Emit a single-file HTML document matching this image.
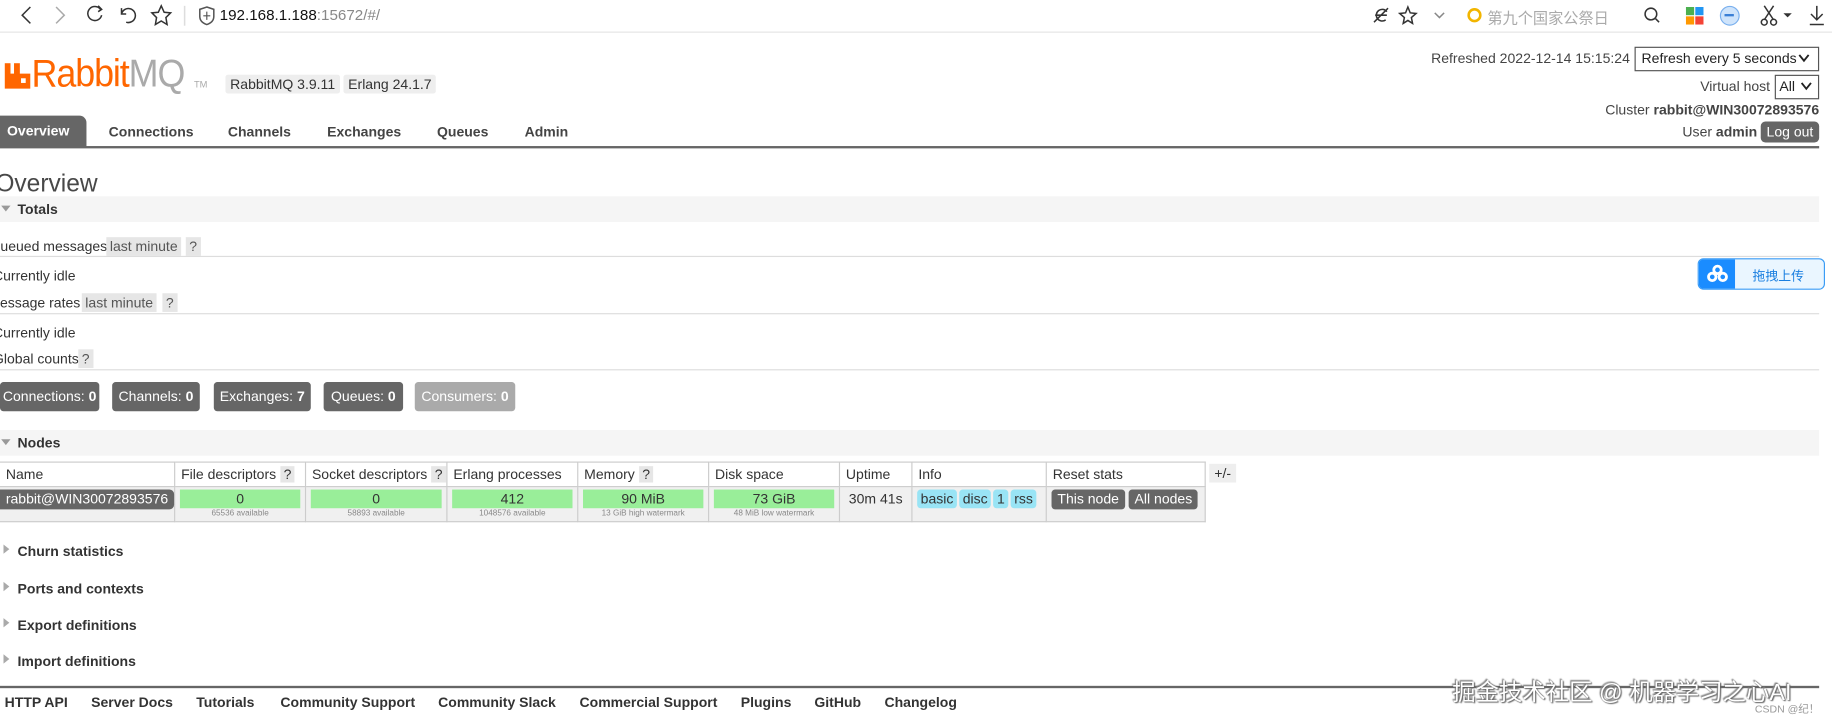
<!DOCTYPE html>
<html><head><meta charset="utf-8">
<style>
html,body{margin:0;padding:0;width:1832px;height:722px;overflow:hidden;background:#fff}
#w{position:absolute;left:0;top:0;width:1568px;height:618px;transform:scale(1.16837);transform-origin:0 0;font-family:"Liberation Sans","Noto Sans CJK SC",sans-serif;font-size:12px;color:#333}
.a{position:absolute;white-space:nowrap}
.b{font-weight:bold}
.badge{position:absolute;background:#eee;padding:0 4px;height:16px;line-height:16px;border-radius:2px}
.q{position:absolute;background:#e6e6e6;height:16px;line-height:16px;padding:0 3px;color:#555}
.hl{position:absolute;left:0;width:1557px;height:1px;background:#ddd}
.btn{position:absolute;top:327px;height:25px;line-height:25px;background:#666;color:#fff;border-radius:3px;text-align:center;font-size:12px}
.bar{position:absolute;left:0;width:1557px;height:22px;background:#f5f5f5}
.tri{position:absolute;width:0;height:0}
td,th{border:1px solid #ccc;padding:0 5px;font-weight:normal;text-align:left}
.g{background:#99ee99;height:16px;line-height:16px;text-align:center;margin:0 auto;width:100%;font-size:12px}
.s{font-size:7px;color:#888;text-align:center;line-height:9px}
.cy{display:inline-block;background:#99e4f5;padding:0 3px;height:16px;line-height:16px;border-radius:3px;margin-right:2px}
.dk{display:inline-block;background:#666;color:#fff;padding:0 5px;height:17px;line-height:17px;border-radius:3px}
.ft{position:absolute;top:594px;font-weight:bold;color:#333}
</style></head><body><div id="w">
<!-- browser bar -->
<div class="a" style="left:0;top:27px;width:1568px;height:1px;background:#e5e5e5"></div>
<svg class="a" style="left:0;top:0" width="1568" height="27" fill="none" stroke="#333" stroke-width="1.3">
<path d="M26 6 L19 13 L26 20"/><path d="M48 6 L55 13 L48 20" stroke="#aaa"/>
<path d="M86 8 A6 6 0 1 0 87 13"/><path d="M84 5 L87 8 L84 10"/>
<path d="M104 7 L104 12 L108 12 M104 12 A6 6 0 1 1 108 19"/>
<path d="M138 5 L140.5 10.5 L146 11 L142 15 L143 21 L138 18 L133 21 L134 15 L130 11 L135.5 10.5 Z"/>
<path d="M158 5 L158 22" stroke="#ddd"/>
<path d="M177 6 L183 8 L183 14 Q183 19 177 21 Q171 19 171 14 L171 8 Z" stroke="#555"/><path d="M177 10 V17 M174 13.5 H180" stroke="#555" stroke-width="1"/>
<path d="M1187 10 A5 5 0 1 0 1186 17 M1177 13 H1187 M1176 19 L1188 7"/>
<path d="M1205 6 L1207 11 L1212 11.5 L1208 15 L1209 20 L1205 17.5 L1201 20 L1202 15 L1198 11.5 L1203 11 Z"/>
<path d="M1228 11 L1232 15 L1236 11" stroke="#888"/>
<circle cx="1262" cy="13" r="5" stroke="#f2b500" stroke-width="2.2"/>
<circle cx="1413" cy="12" r="5"/><path d="M1417 16 L1420 19"/>
<path d="M1510 5 L1518 17 M1518 5 L1510 17"/><circle cx="1510" cy="19" r="2.5"/><circle cx="1518" cy="19" r="2.5"/>
<path d="M1528 12 L1532 12 L1530 14 Z" fill="#333"/>
<path d="M1555 5 V17 M1550 12 L1555 17 L1560 12 M1549 21 H1561"/>
</svg>
<div class="a" style="left:1443px;top:6px;width:7px;height:7px;background:#4caf50"></div><div class="a" style="left:1451px;top:6px;width:7px;height:7px;background:#2196f3"></div>
<div class="a" style="left:1443px;top:14px;width:7px;height:7px;background:#ff9800"></div><div class="a" style="left:1451px;top:14px;width:7px;height:7px;background:#f44336"></div>
<div class="a" style="left:1472px;top:5px;width:15px;height:15px;border-radius:50%;background:#cfe4fb;border:1px solid #7ab0ee"></div><div class="a" style="left:1476px;top:12px;width:8px;height:2px;background:#3a7fd5"></div>
<div class="a" style="left:188px;top:5px;font-size:13px;color:#111">192.168.1.188<span style="color:#888">:15672/#/</span></div>
<div class="a" style="left:1273px;top:5px;font-size:13px;color:#aaa">第九个国家公祭日</div>
<!-- logo -->
<svg class="a" style="left:4px;top:54px" width="22" height="22"><path d="M0 0 H5 V9 H8 V0 H13 V9 H13 V22 H0 Z M13 9 H22 V22 H13Z" fill="#f60"/><rect x="14" y="13" width="4" height="4" fill="#fff"/></svg>
<div class="a" style="left:27px;top:44px;font-size:33px;color:#f60;letter-spacing:-1px;transform:scaleX(0.93);transform-origin:0 0">Rabbit<span style="color:#aaa">MQ</span></div>
<div class="a" style="left:166px;top:68px;font-size:8px;color:#aaa">TM</div>
<div class="badge" style="left:193px;top:64px">RabbitMQ 3.9.11</div>
<div class="badge" style="left:294px;top:64px">Erlang 24.1.7</div>
<!-- right header -->
<div class="a" style="right:173px;top:43px;color:#444">Refreshed 2022-12-14 15:15:24</div>
<div class="a" style="left:1399px;top:40px;width:156px;height:19px;border:1px solid #555;line-height:19px;text-indent:5px;color:#222">Refresh every 5 seconds</div>
<svg class="a" style="left:1539px;top:46px" width="10" height="8" fill="none" stroke="#222" stroke-width="1.6"><path d="M1 1 L5 6 L9 1"/></svg>
<div class="a" style="right:53px;top:67px;color:#444">Virtual host</div>
<div class="a" style="left:1519px;top:64px;width:36px;height:19px;border:1px solid #555;line-height:19px;text-indent:3px;color:#222">All</div>
<svg class="a" style="left:1541px;top:70px" width="10" height="8" fill="none" stroke="#222" stroke-width="1.6"><path d="M1 1 L5 6 L9 1"/></svg>
<div class="a" style="right:11px;top:87px;color:#444">Cluster <b>rabbit@WIN30072893576</b></div>
<div class="a" style="right:64px;top:106px;color:#444">User <b>admin</b></div>
<div class="a" style="left:1507px;top:104px;width:50px;height:18px;line-height:18px;background:#666;color:#fff;border-radius:4px;text-align:center">Log out</div>
<!-- tabs -->
<div class="a" style="left:0;top:99px;width:74px;height:27px;background:#666;border-radius:0 6px 0 0;color:#fff;font-weight:bold;line-height:27px;text-indent:6px">Overview</div>
<div class="a b" style="left:93px;top:106px;color:#444">Connections</div>
<div class="a b" style="left:195px;top:106px;color:#444">Channels</div>
<div class="a b" style="left:280px;top:106px;color:#444">Exchanges</div>
<div class="a b" style="left:374px;top:106px;color:#444">Queues</div>
<div class="a b" style="left:449px;top:106px;color:#444">Admin</div>
<div class="a" style="left:0;top:125px;width:1557px;height:1.5px;background:#666"></div>
<!-- overview -->
<div class="a" style="left:-4px;top:146px;font-size:21px;color:#484848">Overview</div>
<div class="bar" style="top:168px"></div>
<div class="tri" style="left:1px;top:176px;border-left:4px solid transparent;border-right:4px solid transparent;border-top:5px solid #999"></div>
<div class="a b" style="left:15px;top:172px">Totals</div>
<div class="a" style="left:-9px;top:204px">Queued messages</div>
<div class="q" style="left:91px;top:203px;padding:0 3px">last minute</div><div class="q" style="left:159px;top:203px">?</div>
<div class="hl" style="top:219px"></div>
<div class="a" style="left:-6px;top:229px">Currently idle</div>
<div class="a" style="left:-10px;top:252px">Message rates</div>
<div class="q" style="left:70px;top:251px">last minute</div><div class="q" style="left:139px;top:251px">?</div>
<div class="hl" style="top:268px"></div>
<div class="a" style="left:-6px;top:278px">Currently idle</div>
<div class="a" style="left:-6px;top:300px">Global counts</div><div class="q" style="left:67px;top:299px">?</div>
<div class="hl" style="top:316px"></div>
<div class="btn" style="left:0;width:85px">Connections: <b>0</b></div>
<div class="btn" style="left:96px;width:75px">Channels: <b>0</b></div>
<div class="btn" style="left:183px;width:83px">Exchanges: <b>7</b></div>
<div class="btn" style="left:277px;width:68px">Queues: <b>0</b></div>
<div class="btn" style="left:355px;width:86px;background:#aaa">Consumers: <b>0</b></div>
<div class="bar" style="top:368px"></div>
<div class="tri" style="left:1px;top:376px;border-left:4px solid transparent;border-right:4px solid transparent;border-top:5px solid #999"></div>
<div class="a b" style="left:15px;top:372px">Nodes</div>
<!-- table -->
<table class="a" style="left:-1px;top:395px;border-collapse:collapse;font-size:12px;color:#333;table-layout:fixed;width:1032px">
<colgroup><col style="width:150px"><col style="width:112px"><col style="width:121px"><col style="width:112px"><col style="width:112px"><col style="width:112px"><col style="width:62px"><col style="width:115px"><col style="width:136px"></colgroup>
<tr style="height:21px;background:#fff">
<th>Name</th><th>File descriptors <span style="background:#e6e6e6;padding:0 3px">?</span></th><th>Socket descriptors <span style="background:#e6e6e6;padding:0 3px">?</span></th><th>Erlang processes</th><th>Memory <span style="background:#e6e6e6;padding:0 3px">?</span></th><th>Disk space</th><th>Uptime</th><th>Info</th><th>Reset stats</th></tr>
<tr style="height:30px;background:#f0f0f0;vertical-align:top">
<td style="padding:2px 0 0 0"><span class="dk" style="padding:0 5px;border-radius:0 4px 4px 0">rabbit@WIN30072893576</span></td>
<td style="padding:2px 4px 0"><div class="g">0</div><div class="s">65536 available</div></td>
<td style="padding:2px 4px 0"><div class="g">0</div><div class="s">58893 available</div></td>
<td style="padding:2px 4px 0"><div class="g">412</div><div class="s">1048576 available</div></td>
<td style="padding:2px 4px 0"><div class="g">90 MiB</div><div class="s">13 GiB high watermark</div></td>
<td style="padding:2px 4px 0"><div class="g">73 GiB</div><div class="s">48 MiB low watermark</div></td>
<td style="padding:3px 2px 0;text-align:center">30m 41s</td>
<td style="padding:2px 4px 0"><span class="cy">basic</span><span class="cy">disc</span><span class="cy">1</span><span class="cy">rss</span></td>
<td style="padding:2px 4px 0"><span class="dk">This node</span> <span class="dk">All nodes</span></td></tr>
</table>
<div class="a" style="left:1035px;top:397px;width:23px;height:16px;line-height:16px;background:#eee;text-align:center">+/-</div>
<!-- collapsed -->
<div class="tri" style="left:3px;top:466px;border-top:4px solid transparent;border-bottom:4px solid transparent;border-left:5px solid #aaa"></div><div class="a b" style="left:15px;top:465px">Churn statistics</div>
<div class="tri" style="left:3px;top:498px;border-top:4px solid transparent;border-bottom:4px solid transparent;border-left:5px solid #aaa"></div><div class="a b" style="left:15px;top:497px">Ports and contexts</div>
<div class="tri" style="left:3px;top:529px;border-top:4px solid transparent;border-bottom:4px solid transparent;border-left:5px solid #aaa"></div><div class="a b" style="left:15px;top:528px">Export definitions</div>
<div class="tri" style="left:3px;top:560px;border-top:4px solid transparent;border-bottom:4px solid transparent;border-left:5px solid #aaa"></div><div class="a b" style="left:15px;top:559px">Import definitions</div>
<div class="a" style="left:0;top:587px;width:1557px;height:1.5px;background:#666"></div>
<div class="ft" style="left:4px">HTTP API</div><div class="ft" style="left:78px">Server Docs</div><div class="ft" style="left:168px">Tutorials</div><div class="ft" style="left:240px">Community Support</div><div class="ft" style="left:375px">Community Slack</div><div class="ft" style="left:496px">Commercial Support</div><div class="ft" style="left:634px">Plugins</div><div class="ft" style="left:697px">GitHub</div><div class="ft" style="left:757px">Changelog</div>
<div class="a" style="left:1243px;top:576px;font-size:20px;color:#fff;text-shadow:0 0 1px #555,1px 1px 1px #666,-1px -1px 1px #888">掘金技术社区 @ 机器学习之心AI</div>
<div class="a" style="left:1502px;top:600px;font-size:9px;color:#999">CSDN @纪！</div>
<!-- upload widget -->
<div class="a" style="left:1453px;top:221px;width:107px;height:25px;border:1px solid #3a9cf5;border-radius:5px;background:#eaf6ff;overflow:hidden">
<div style="position:absolute;left:0;top:0;width:31px;height:25px;background:#1a8cff"></div>
<svg style="position:absolute;left:7px;top:4px" width="18" height="16" fill="none" stroke="#fff" stroke-width="2.4"><circle cx="9" cy="5" r="3.2"/><circle cx="4.5" cy="11" r="3.2"/><circle cx="13.5" cy="11" r="3.2"/></svg>
<div style="position:absolute;left:46px;top:6px;font-size:11px;color:#1a7fe0">拖拽上传</div></div>
</div></body></html>
